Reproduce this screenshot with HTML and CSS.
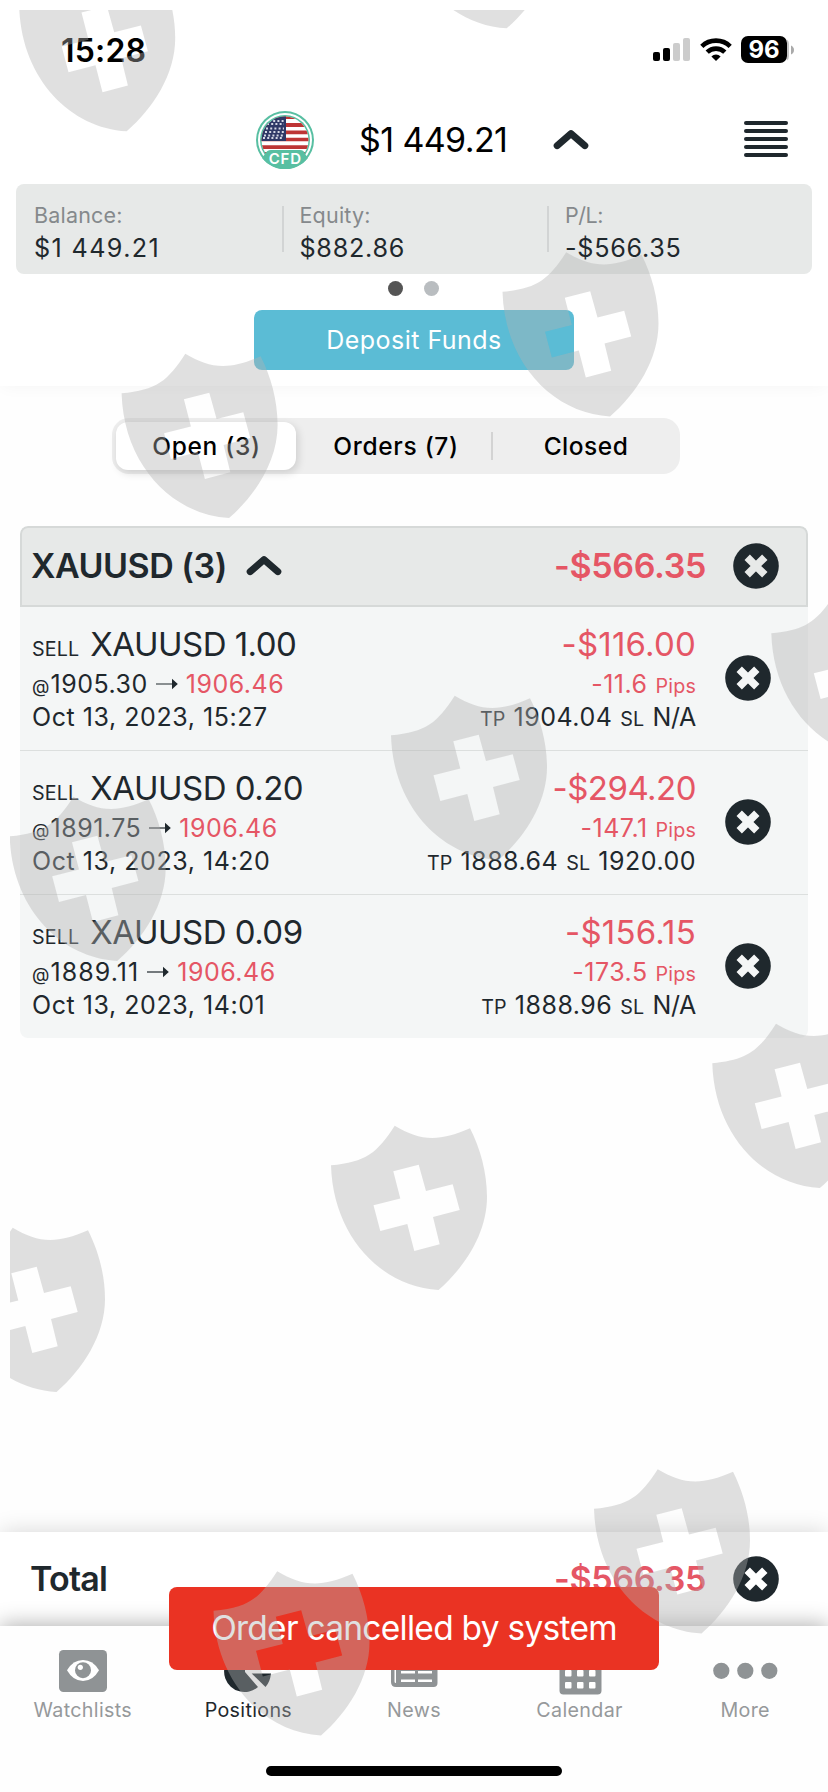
FILE: index.html
```
<!DOCTYPE html>
<html lang="en">
<head>
<meta charset="utf-8">
<title>Positions</title>
<link rel="stylesheet" href="styles.css">
</head>
<body>
<svg class="defs" width="0" height="0" aria-hidden="true">
  <symbol id="close" viewBox="0 0 46 46">
    <circle cx="23" cy="23" r="22.8" fill="#1f282d"/>
    <path d="M14.2 14.2 31.8 31.8M31.8 14.2 14.200 31.8" stroke="currentColor" stroke-width="7.6"/>
  </symbol>
  <symbol id="chevron" viewBox="0 0 36 22">
    <path d="M4.200 16.600 18 4.700 31.800 16.600" fill="none" stroke="#1f282d" stroke-width="7" stroke-linecap="round" stroke-linejoin="round"/>
  </symbol>
  <symbol id="arrow" viewBox="0 0 22 12">
    <path d="M0 6H17" stroke="#1f282d" stroke-width="1.2"/><path d="M16 .8 21.8 6 16 11.2Z" fill="#1f282d"/>
  </symbol>
  <symbol id="shield" viewBox="0 0 220 220">
    <path fill-rule="evenodd" d="M31 65.3C66 62 77 53 94.7 25.7C119 40 137 43 170 28.3C180 48 187 72 187 97C187 133 165 167 138.5 190C82 187 33 137 31 65.3ZM93.3 71.3 100.3 98.5 73.5 105.3 80.3 131 107.3 124 114.3 151 139.7 144.3 133 117 159.7 110 152.7 84.3 126 91 118.7 64.7Z"/>
  </symbol>
</svg>

<div class="screen">
  <header class="top">
    <div class="status">
      <span class="clock">15:28</span>
      <div class="indicators">
        <svg width="38" height="28" viewBox="0 0 38 28"><rect x="0" y="16" width="7" height="9" rx="2"/><rect x="10" y="12" width="7" height="13" rx="2"/><g fill="#ccc"><rect x="20" y="7" width="7" height="18" rx="2"/><rect x="30" y="2" width="7" height="23" rx="2"/></g></svg>
        <svg class="wifi" width="32" height="28" viewBox="0 0 32 28" fill="none" stroke="#000" stroke-width="4.6"><path d="M1.8 10.3A20.5 20.5 0 0 1 30.2 10.3"/><path d="M7.2 16.2A12.6 12.6 0 0 1 24.8 16.2"/><path d="M16 25 11.4 20.4A6.6 6.6 0 0 1 20.6 20.4Z" fill="#000" stroke="none"/></svg>
        <span class="battery">96</span>
        <svg width="8" height="28" viewBox="0 0 8 28"><path d="M0 3.5Q2 5 2 8V20Q2 23 0 24.5Z" fill="#c4c4c4"/><path d="M4 9.5Q7 11 7 14T4 18.5Z" fill="#aaa"/></svg>
      </div>
    </div>

    <div class="account">
      <svg class="flag" width="58" height="58" viewBox="0 0 58 58">
        <defs><clipPath id="disc"><circle cx="29" cy="29" r="23.5"/></clipPath></defs>
        <circle cx="29" cy="29" r="29" fill="#58bfa2"/><circle cx="29" cy="29" r="27" fill="#fff"/><circle cx="29" cy="29" r="25" fill="#58bfa2"/>
        <g clip-path="url(#disc)">
          <path fill="#fff" d="M0 0H58V58H0Z"/>
          <path fill="#bd3535" d="M0 4H58V8H0ZM0 12H58V16H0ZM0 19.5H58V23.3H0ZM0 26.7H58V30.3H0ZM0 34.3H58V38H0ZM0 41H58V45H0Z"/>
          <path fill="#2f3866" d="M0 0H30V30H0Z"/>
          <path stroke="#d5d8e5" stroke-width="1.8" stroke-dasharray="2 2.2" d="M13 10H28M11 13H28M10 17.5H28M9 21H28M8 24.5H28M7 27H28"/>
        </g>
        <path fill="#58bfa2" d="M9 43Q11 39 15 39H44Q48 39 49 43L52 47A29 29 0 0 1 6 47Z"/>
        <text x="29.3" y="52.7" text-anchor="middle" class="flag-text">CFD</text>
      </svg>
      <span class="amount">$1 449.21</span>
      <svg class="toggle" width="36" height="22"><use href="#chevron"/></svg>
      <div class="menu"><i></i><i></i><i></i><i></i><i></i></div>
    </div>

    <div class="summary">
      <div class="stat"><span class="stat-label">Balance:</span><span class="stat-value balance">$1 449.21</span></div>
      <div class="stat"><span class="stat-label">Equity:</span><span class="stat-value">$882.86</span></div>
      <div class="stat"><span class="stat-label pl">P/L:</span><span class="stat-value">-$566.35</span></div>
    </div>
    <div class="dots"><i class="on"></i><i></i></div>
    <div class="deposit">Deposit Funds</div>
  </header>

  <main class="content">
    <div class="segments">
      <div class="segment active">Open (3)</div>
      <div class="segment">Orders (7)</div>
      <div class="segment last">Closed</div>
    </div>

    <section class="card">
      <div class="group">
        <span class="heading symbol">XAUUSD (3)</span>
        <svg width="36" height="22"><use href="#chevron"/></svg>
        <span class="heading loss push">-$566.35</span>
        <svg class="close on-grey" width="46" height="46"><use href="#close"/></svg>
      </div>

      <div class="row">
        <div class="info">
          <div class="line big"><small>SELL</small><span>XAUUSD 1.00</span></div>
          <div class="line mid"><small class="at">@</small><span>1905.30</span><svg width="22" height="12"><use href="#arrow"/></svg><span class="loss">1906.46</span></div>
          <div class="line date">Oct 13, 2023, 15:27</div>
        </div>
        <div class="result">
          <div class="line big loss plus">-$116.00</div>
          <div class="line mid pips loss"><span>-11.6</span><small>Pips</small></div>
          <div class="line limits"><small>TP</small><span>1904.04</span><small>SL</small><span class="na">N/A</span></div>
        </div>
        <svg class="close" width="46" height="46"><use href="#close"/></svg>
      </div>

      <div class="row">
        <div class="info">
          <div class="line big"><small>SELL</small><span>XAUUSD 0.20</span></div>
          <div class="line mid"><small class="at">@</small><span>1891.75</span><svg width="22" height="12"><use href="#arrow"/></svg><span class="loss">1906.46</span></div>
          <div class="line date">Oct 13, 2023, 14:20</div>
        </div>
        <div class="result">
          <div class="line big loss">-$294.20</div>
          <div class="line mid pips loss"><span>-147.1</span><small>Pips</small></div>
          <div class="line limits"><small>TP</small><span>1888.64</span><small>SL</small><span>1920.00</span></div>
        </div>
        <svg class="close" width="46" height="46"><use href="#close"/></svg>
      </div>

      <div class="row">
        <div class="info">
          <div class="line big"><small>SELL</small><span>XAUUSD 0.09</span></div>
          <div class="line mid"><small class="at">@</small><span class="narrow">1889.11</span><svg width="22" height="12"><use href="#arrow"/></svg><span class="loss">1906.46</span></div>
          <div class="line date">Oct 13, 2023, 14:01</div>
        </div>
        <div class="result">
          <div class="line big loss plus">-$156.15</div>
          <div class="line mid pips loss"><span>-173.5</span><small>Pips</small></div>
          <div class="line limits"><small>TP</small><span>1888.96</span><small>SL</small><span class="na">N/A</span></div>
        </div>
        <svg class="close" width="46" height="46"><use href="#close"/></svg>
      </div>
    </section>
  </main>

  <div class="total">
    <span class="heading total-label">Total</span>
    <span class="heading loss push">-$566.35</span>
    <svg class="close on-white" width="46" height="46"><use href="#close"/></svg>
  </div>

  <nav class="tabs">
    <div class="tab">
      <svg width="50" height="46" viewBox="0 0 50 46"><rect x="1" y="1" width="48" height="42" rx="4.5" fill="#8f9395"/><path d="M9 21.3Q15 11 25 11T41 21.3Q35 32 25 32T9 21.3Z" fill="#fff"/><circle cx="25" cy="21.2" r="8" fill="#8f9395"/><circle cx="22.3" cy="18.3" r="2.6" fill="#fff"/></svg>
      <span>Watchlists</span>
    </div>
    <div class="tab current">
      <svg width="50" height="46" viewBox="0 0 50 46"><path d="M22 2A20.5 20.5 0 1 0 35 38L22 23Z" fill="#1f282d"/><path d="M28.7 24.5H48Q47 33 42.5 38Z" fill="#1f282d"/></svg>
      <span>Positions</span>
    </div>
    <div class="tab">
      <svg width="50" height="46" viewBox="0 0 50 46"><path fill="#8f9395" fill-rule="evenodd" d="M7 3H48.500V34Q48.500 38 44.500 38H7Q2 38 2 33V8H7ZM5.500 12V32.500Q5.500 34 7 34V12ZM12 22V24.500H26V22ZM29 22V24.500H43V22ZM12 30.500V33H26V30.500ZM29 30.500V33H43V30.500Z"/></svg>
      <span>News</span>
    </div>
    <div class="tab">
      <svg width="50" height="46" viewBox="0 0 50 46"><path fill="#8f9395" d="M8.500 4H42.500Q46.500 4 46.500 8V41.500Q46.500 45.500 42.500 45.500H8.500Q4.500 45.500 4.500 41.500V8Q4.500 4 8.500 4Z"/><g fill="#fff"><rect x="10" y="21" width="6.500" height="6.500" rx="1"/><rect x="22" y="21" width="6.500" height="6.500" rx="1"/><rect x="34" y="21" width="6.500" height="6.500" rx="1"/><rect x="10" y="33" width="6.500" height="6.500" rx="1"/><rect x="22" y="33" width="6.500" height="6.500" rx="1"/><rect x="34" y="33" width="6.500" height="6.500" rx="1"/></g></svg>
      <span>Calendar</span>
    </div>
    <div class="tab">
      <svg width="66" height="46" viewBox="0 0 66 46" fill="#8f9395"><circle cx="9.300" cy="21.800" r="8.100"/><circle cx="33.300" cy="21.800" r="8.100"/><circle cx="57.300" cy="21.800" r="8.100"/></svg>
      <span>More</span>
    </div>
    <div class="home"></div>
  </nav>

  <div class="toast">Order cancelled by system</div>

  <svg class="marks" width="828" height="1792" viewBox="0 0 828 1792">
    <defs><clipPath id="frame"><rect x="10" y="10" width="818" height="1782"/></clipPath></defs>
    <g clip-path="url(#frame)" fill="#b2b2b2" fill-opacity=".4">
      <use href="#shield" x="-11.800" y="-58.700" width="220" height="220"/>
      <use href="#shield" x="368.200" y="-161.700" width="220" height="220"/>
      <use href="#shield" x="90.600" y="328" width="220" height="220"/>
      <use href="#shield" x="471.500" y="226.500" width="220" height="220"/>
      <use href="#shield" x="740.300" y="568" width="220" height="220"/>
      <use href="#shield" x="360" y="670" width="220" height="220"/>
      <use href="#shield" x="-21.300" y="771" width="220" height="220"/>
      <use href="#shield" x="681.300" y="998" width="220" height="220"/>
      <use href="#shield" x="300" y="1100" width="220" height="220"/>
      <use href="#shield" x="-82" y="1202" width="220" height="220"/>
      <use href="#shield" x="563" y="1443.500" width="220" height="220"/>
      <use href="#shield" x="182.500" y="1545.500" width="220" height="220"/>
    </g>
  </svg>
</div>
</body>
</html>
```

FILE: styles.css
```
* { box-sizing: border-box; }
body {
  margin: 0;
  background: #fefefe;
  color: #1f282d;
  font-family: Inter, "Liberation Sans", sans-serif;
}
.defs { position: absolute; }
svg { display: block; flex: none; }
.screen {
  position: relative;
  display: flex;
  flex-direction: column;
  width: 828px;
  height: 1792px;
  overflow: hidden;
}
.top {
  height: 386px;
  background: #fff;
  box-shadow: 0 2px 16px -2px rgba(0, 0, 0, .045);
}

/* status bar */
.status {
  display: flex;
  justify-content: space-between;
  height: 96px;
  padding: 30px 33px 0 61px;
  color: #000;
}
.clock {
  font-size: 32px;
  font-weight: 600;
  line-height: 41px;
  letter-spacing: .2px;
}
.indicators { display: flex; padding-top: 6px; }
.wifi { margin: 0 9px 0 9px; }
.battery {
  width: 46px;
  height: 27px;
  border-radius: 7px;
  background: #000;
  color: #fff;
  font-size: 24px;
  font-weight: 700;
  line-height: 27px;
  text-align: center;
}

/* account */
.account {
  display: flex;
  align-items: center;
  height: 88px;
  padding: 0 40px 0 256px;
}
.flag-text {
  fill: #fff;
  font-size: 15px;
  font-weight: 600;
  letter-spacing: .8px;
}
.amount {
  width: 148px;
  height: 42px;
  margin-left: 45px;
  color: #000;
  font-size: 34px;
  line-height: 41px;
  letter-spacing: -.61px;
  white-space: nowrap;
}
.toggle { margin-left: 46px; }
.menu {
  display: grid;
  gap: 4px;
  width: 44px;
  margin: -2px 0 0 auto;
}
.menu i { height: 4px; border-radius: 2px; background: #1f282d; }

.summary {
  display: grid;
  grid-template-columns: 265.500px 265.500px 1fr;
  height: 90px;
  margin: 0 16px;
  padding-top: 20px;
  border-radius: 8px;
  background: #e7e9e8;
}
.stat {
  display: flex;
  flex-direction: column;
  height: 56px;
  padding-left: 18px;
  background: linear-gradient(#d2d4d4, #d2d4d4) 0 2px / 2px 46px no-repeat;
}
.stat:first-child { background: none; }
.stat-label {
  color: #85898c;
  font-size: 21.500px;
  line-height: 22px;
  letter-spacing: .2px;
}
.pl { letter-spacing: -.5px; }
.stat-value {
  margin-top: 6px;
  font-size: 25.200px;
  line-height: 33px;
  letter-spacing: .7px;
}
.balance { letter-spacing: 1.360px; }

.dots {
  display: flex;
  justify-content: center;
  gap: 21px;
  height: 36px;
  padding: 7px 1px 0 0;
}
.dots i { width: 15px; height: 15px; border-radius: 50%; background: #b9bdc0; }
.dots .on { background: #555; }
.deposit {
  width: 320px;
  height: 60px;
  margin: 0 auto;
  border-radius: 8px;
  background: #5bbcd5;
  color: #fff;
  font-size: 25px;
  line-height: 60px;
  letter-spacing: .48px;
  text-align: center;
}

/* segmented control */
.content { height: 1146px; padding: 32px 20px 0; }
.segments {
  display: grid;
  grid-template-columns: 184px 1fr 189px;
  width: 568px;
  height: 56px;
  margin-left: 92px;
  padding: 4px 0 4px 4px;
  border-radius: 17px;
  background: #eee;
}
.segment {
  padding-left: 1px;
  color: #000;
  font-size: 24.500px;
  font-weight: 500;
  line-height: 48px;
  letter-spacing: .7px;
  text-align: center;
}
.active {
  width: 180px;
  border-radius: 12px;
  background: #fff;
  box-shadow: 2px 3px 8px rgba(0, 0, 0, .14);
}
.last {
  letter-spacing: .5px;
  background: linear-gradient(#d3d3d3, #d3d3d3) 0 10px / 2px 28px no-repeat;
}

/* positions */
.card {
  margin-top: 52px;
  overflow: hidden;
  border-radius: 8px;
  background: #f4f6f6;
}
.heading { font-size: 34px; font-weight: 600; letter-spacing: -.34px; line-height: 44px; }
.symbol { letter-spacing: -.5px; }
.loss { color: #e55665; }
.push { margin-left: auto; }
.close { color: #f4f6f6; }
.on-grey { color: #e7e9e8; }
.on-white { color: #fff; }
.group {
  display: flex;
  align-items: center;
  height: 81px;
  padding: 0 27px 1px 9px;
  border: 2px solid #d6d9d8;
  border-radius: 8px 8px 0 0;
  background: #e7e9e8;
}
.group .symbol { margin-right: 19px; }
.heading + .close { margin-left: 27px; }
.row {
  display: grid;
  grid-template-columns: 1fr auto 46px;
  height: 144px;
  padding: 17px 37px 0 12px;
  border-top: 1px solid #dcdfde;
}
.row .close { margin: 31px 0 0; }
.group + .row { height: 143px; border-top: 0; }
.line { display: flex; align-items: baseline; height: 40px; white-space: nowrap; line-height: 40px; }
.line small { font-size: 19.700px; line-height: 20px; letter-spacing: .15px; }
.big { font-size: 33px; letter-spacing: -.52px; gap: 11px; }
.plus { letter-spacing: .2px; }
.mid { font-size: 25px; letter-spacing: .5px; gap: 8px; }
.mid svg { align-self: center; }
.mid .at { margin-right: -7px; font-size: 18px; }
.narrow { letter-spacing: 1.050px; }
.date { height: 26px; font-size: 25px; line-height: 26px; letter-spacing: .55px; }
.result { margin-right: 29px; }
.result .line { justify-content: flex-end; }
.limits { height: 26px; font-size: 25px; line-height: 26px; letter-spacing: .5px; gap: 8px; }
.limits small { line-height: 18px; }
.na { letter-spacing: -.3px; }

/* bottom bars */
.total {
  display: flex;
  align-items: center;
  height: 94px;
  padding: 0 49px 0 30px;
  background: #fff;
  box-shadow: 0 -1px 22px -1px rgba(0, 0, 0, .16);
}
.total-label { letter-spacing: -.8px; }
.tabs {
  display: grid;
  grid-template-columns: repeat(5, 165.600px);
  grid-template-rows: 117px auto;
  height: 166px;
  padding: 23px 0 0;
  background: #fefefe;
  box-shadow: 0 -2px 20px rgba(0, 0, 0, .3);
}
.tab {
  display: flex;
  flex-direction: column;
  align-items: center;
  color: #96999b;
  font-size: 19.700px;
  line-height: 28px;
  letter-spacing: .33px;
}
.tab svg { margin-bottom: 1px; }
.current { color: #1f282d; }
.home {
  grid-column: 1 / -1;
  justify-self: center;
  width: 296px;
  height: 10px;
  border-radius: 5px;
  background: #000;
}
.toast {
  position: absolute;
  left: 169px;
  top: 1587px;
  width: 490px;
  height: 83px;
  border-radius: 8px;
  background: #ea3323;
  color: #fff;
  font-size: 33.500px;
  line-height: 82px;
  letter-spacing: -.730px;
  text-align: center;
}
.marks { position: absolute; left: 0; top: 0; }
```
